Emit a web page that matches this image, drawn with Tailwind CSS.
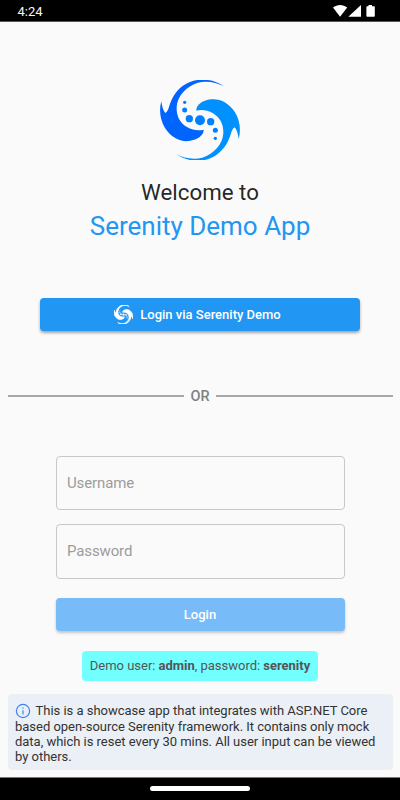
<!DOCTYPE html>
<html lang="en">
<head>
<meta charset="utf-8">
<title>Serenity Demo App</title>
<script src="https://cdn.jsdelivr.net/npm/@tailwindcss/browser@4"></script>
</head>
<body class="bg-[#fafafa]">
<div class="flex h-[800px] w-[400px] flex-col overflow-hidden bg-[#fafafa] font-[Roboto,sans-serif] text-black/87">
  <header class="flex h-[22px] shrink-0 items-center justify-between border-b border-[#555] bg-black pr-[25px] pl-[17.5px] pt-[1px] text-white">
    <span class="pt-[1px] text-[13px] text-[#f8f8f8]">4:24</span>
    <svg class="h-[14px] w-[42px]" viewBox="0 0 42 14" fill="#fff"><path d="M0 3.6C4.2 .1 10 .1 14.2 3.6L7.1 12.8Z"/><path d="M15.3 12.8L28 1V12.8Z"/><path d="M35.5 1H39V2.2H41Q41.8 2.2 41.8 3V12Q41.8 12.8 41 12.8H34.2Q33.4 12.8 33.4 12V3Q33.4 2.2 34.2 2.2H35.5Z"/></svg>
  </header>
  <main class="flex flex-1 flex-col items-center px-[7.5px] whitespace-nowrap">
    <svg class="mt-[58px] size-20 shrink-0" viewBox="30 30 240 240">
      <path fill="#0064ff" d="M222 49C185 23 135 22 101 46C75 64 64 88 57 111C54 121 50 127 46 129C39 122 36 108 34 94C26 121 31 151 45 174C63 203 91 216 117 213C145 210 162 194 161 179C146 183 128 181 111 171C90 158 79 139 80 111C81 80 108 49 143 38C171 31 199 37 222 49Z"/>
      <path fill="#0091ff" transform="rotate(180 150 150.5)" d="M222 49C185 23 135 22 101 46C75 64 64 88 57 111C54 121 50 127 46 129C39 122 36 108 34 94C26 121 31 151 45 174C63 203 91 216 117 213C145 210 162 194 161 179C146 183 128 181 111 171C90 158 79 139 80 111C81 80 108 49 143 38C171 31 199 37 222 49Z"/>
      <g fill="#0080ff"><circle cx="104" cy="97" r="5"/><circle cx="104" cy="120" r="7.5"/><circle cx="118" cy="146" r="11"/><circle cx="150" cy="151" r="15"/><circle cx="182" cy="155" r="11"/><circle cx="196" cy="181" r="7.5"/><circle cx="196" cy="205" r="5"/></g>
    </svg>
    <h1 class="mt-[16px] flex flex-col items-center">
      <span class="text-[22.3px] leading-[32px]">Welcome to</span>
      <span class="text-[26px] leading-[36px] text-[#2196f3]">Serenity Demo App</span>
    </h1>
    <button class="mt-[54px] flex h-[33px] w-[320px] shrink-0 items-center justify-center gap-[7px] rounded-[4px] bg-[#2196f3] pr-[5px] text-[13px] font-medium text-white shadow-[0_2px_3px_rgba(0,0,0,0.35)]">
      <svg class="size-[19px]" viewBox="30 30 240 240" fill="#fff" stroke="#fff" stroke-width="8">
        <path d="M222 49C185 23 135 22 101 46C75 64 64 88 57 111C54 121 50 127 46 129C39 122 36 108 34 94C26 121 31 151 45 174C63 203 91 216 117 213C145 210 162 194 161 179C146 183 128 181 111 171C90 158 79 139 80 111C81 80 108 49 143 38C171 31 199 37 222 49Z"/>
        <path transform="rotate(180 150 150.5)" d="M222 49C185 23 135 22 101 46C75 64 64 88 57 111C54 121 50 127 46 129C39 122 36 108 34 94C26 121 31 151 45 174C63 203 91 216 117 213C145 210 162 194 161 179C146 183 128 181 111 171C90 158 79 139 80 111C81 80 108 49 143 38C171 31 199 37 222 49Z"/>
        <g stroke="none"><circle cx="104" cy="97" r="5"/><circle cx="104" cy="120" r="7.5"/><circle cx="118" cy="146" r="11"/><circle cx="150" cy="151" r="15"/><circle cx="182" cy="155" r="11"/><circle cx="196" cy="181" r="7.5"/><circle cx="196" cy="205" r="5"/></g>
      </svg>
      <span class="pt-[1px]">Login via Serenity Demo</span>
    </button>
    <div class="mt-[55px] flex h-[20px] w-full items-center gap-[6.5px] text-[14.5px] leading-[20px] font-medium text-[#808080]">
      <div class="h-[1.5px] flex-1 bg-[#a8a8a8]"></div><span class="pt-[2px]">OR</span><div class="h-[1.5px] flex-1 bg-[#a8a8a8]"></div>
    </div>
    <div class="mt-[50px] flex h-[54px] w-[289px] shrink-0 items-center rounded-[4px] border border-[#c8c8c8] px-[10.5px] text-[15px] tracking-[-0.13px] text-[#9c9c9c]">Username</div>
    <div class="mt-[14px] flex h-[55px] w-[289px] shrink-0 items-center rounded-[4px] border border-[#c8c8c8] px-[10.5px] text-[15px] tracking-[-0.13px] text-[#9c9c9c]">Password</div>
    <button class="mt-[19px] flex h-[33px] w-[289px] shrink-0 items-center justify-center rounded-[4px] bg-[#77bcf8] pt-[1px] text-[13px] font-medium text-white shadow-[0_2px_3px_rgba(0,0,0,0.22)]">Login</button>
    <div class="mt-[20px] flex h-[30px] w-[236px] shrink-0 items-center justify-center rounded-[4px] bg-[#72ffff] text-[13px] tracking-[-0.02px] text-[#555]"><p>Demo user: <b>admin</b>, password: <b>serenity</b></p></div>
    <div class="mt-[13px] h-[76px] w-full shrink-0 rounded-[4px] bg-[#eaf0f5] px-[7.5px] pt-[8px] text-[13px] leading-[15px] tracking-[-0.02px] text-[#333]">
      <div class="flex h-[17px] items-center gap-[4.5px]"><svg class="size-[16px]" viewBox="0 0 16 16" fill="none" stroke="#3f82f7" stroke-width="1.2"><circle cx="8" cy="8" r="6.6"/><path d="M8 7.2V11.5M8 4.5V5.8"/></svg><span>This is a showcase app that integrates with ASP.NET Core</span></div>
      <p>based open-source Serenity framework. It contains only mock<br>data, which is reset every 30 mins. All user input can be viewed<br>by others.</p>
    </div>
  </main>
  <footer class="flex h-[23px] shrink-0 justify-center border-t border-[#777] bg-black pt-[8px]"><div class="h-[5px] w-[100px] rounded-full bg-white"></div></footer>
</div>
</body>
</html>
